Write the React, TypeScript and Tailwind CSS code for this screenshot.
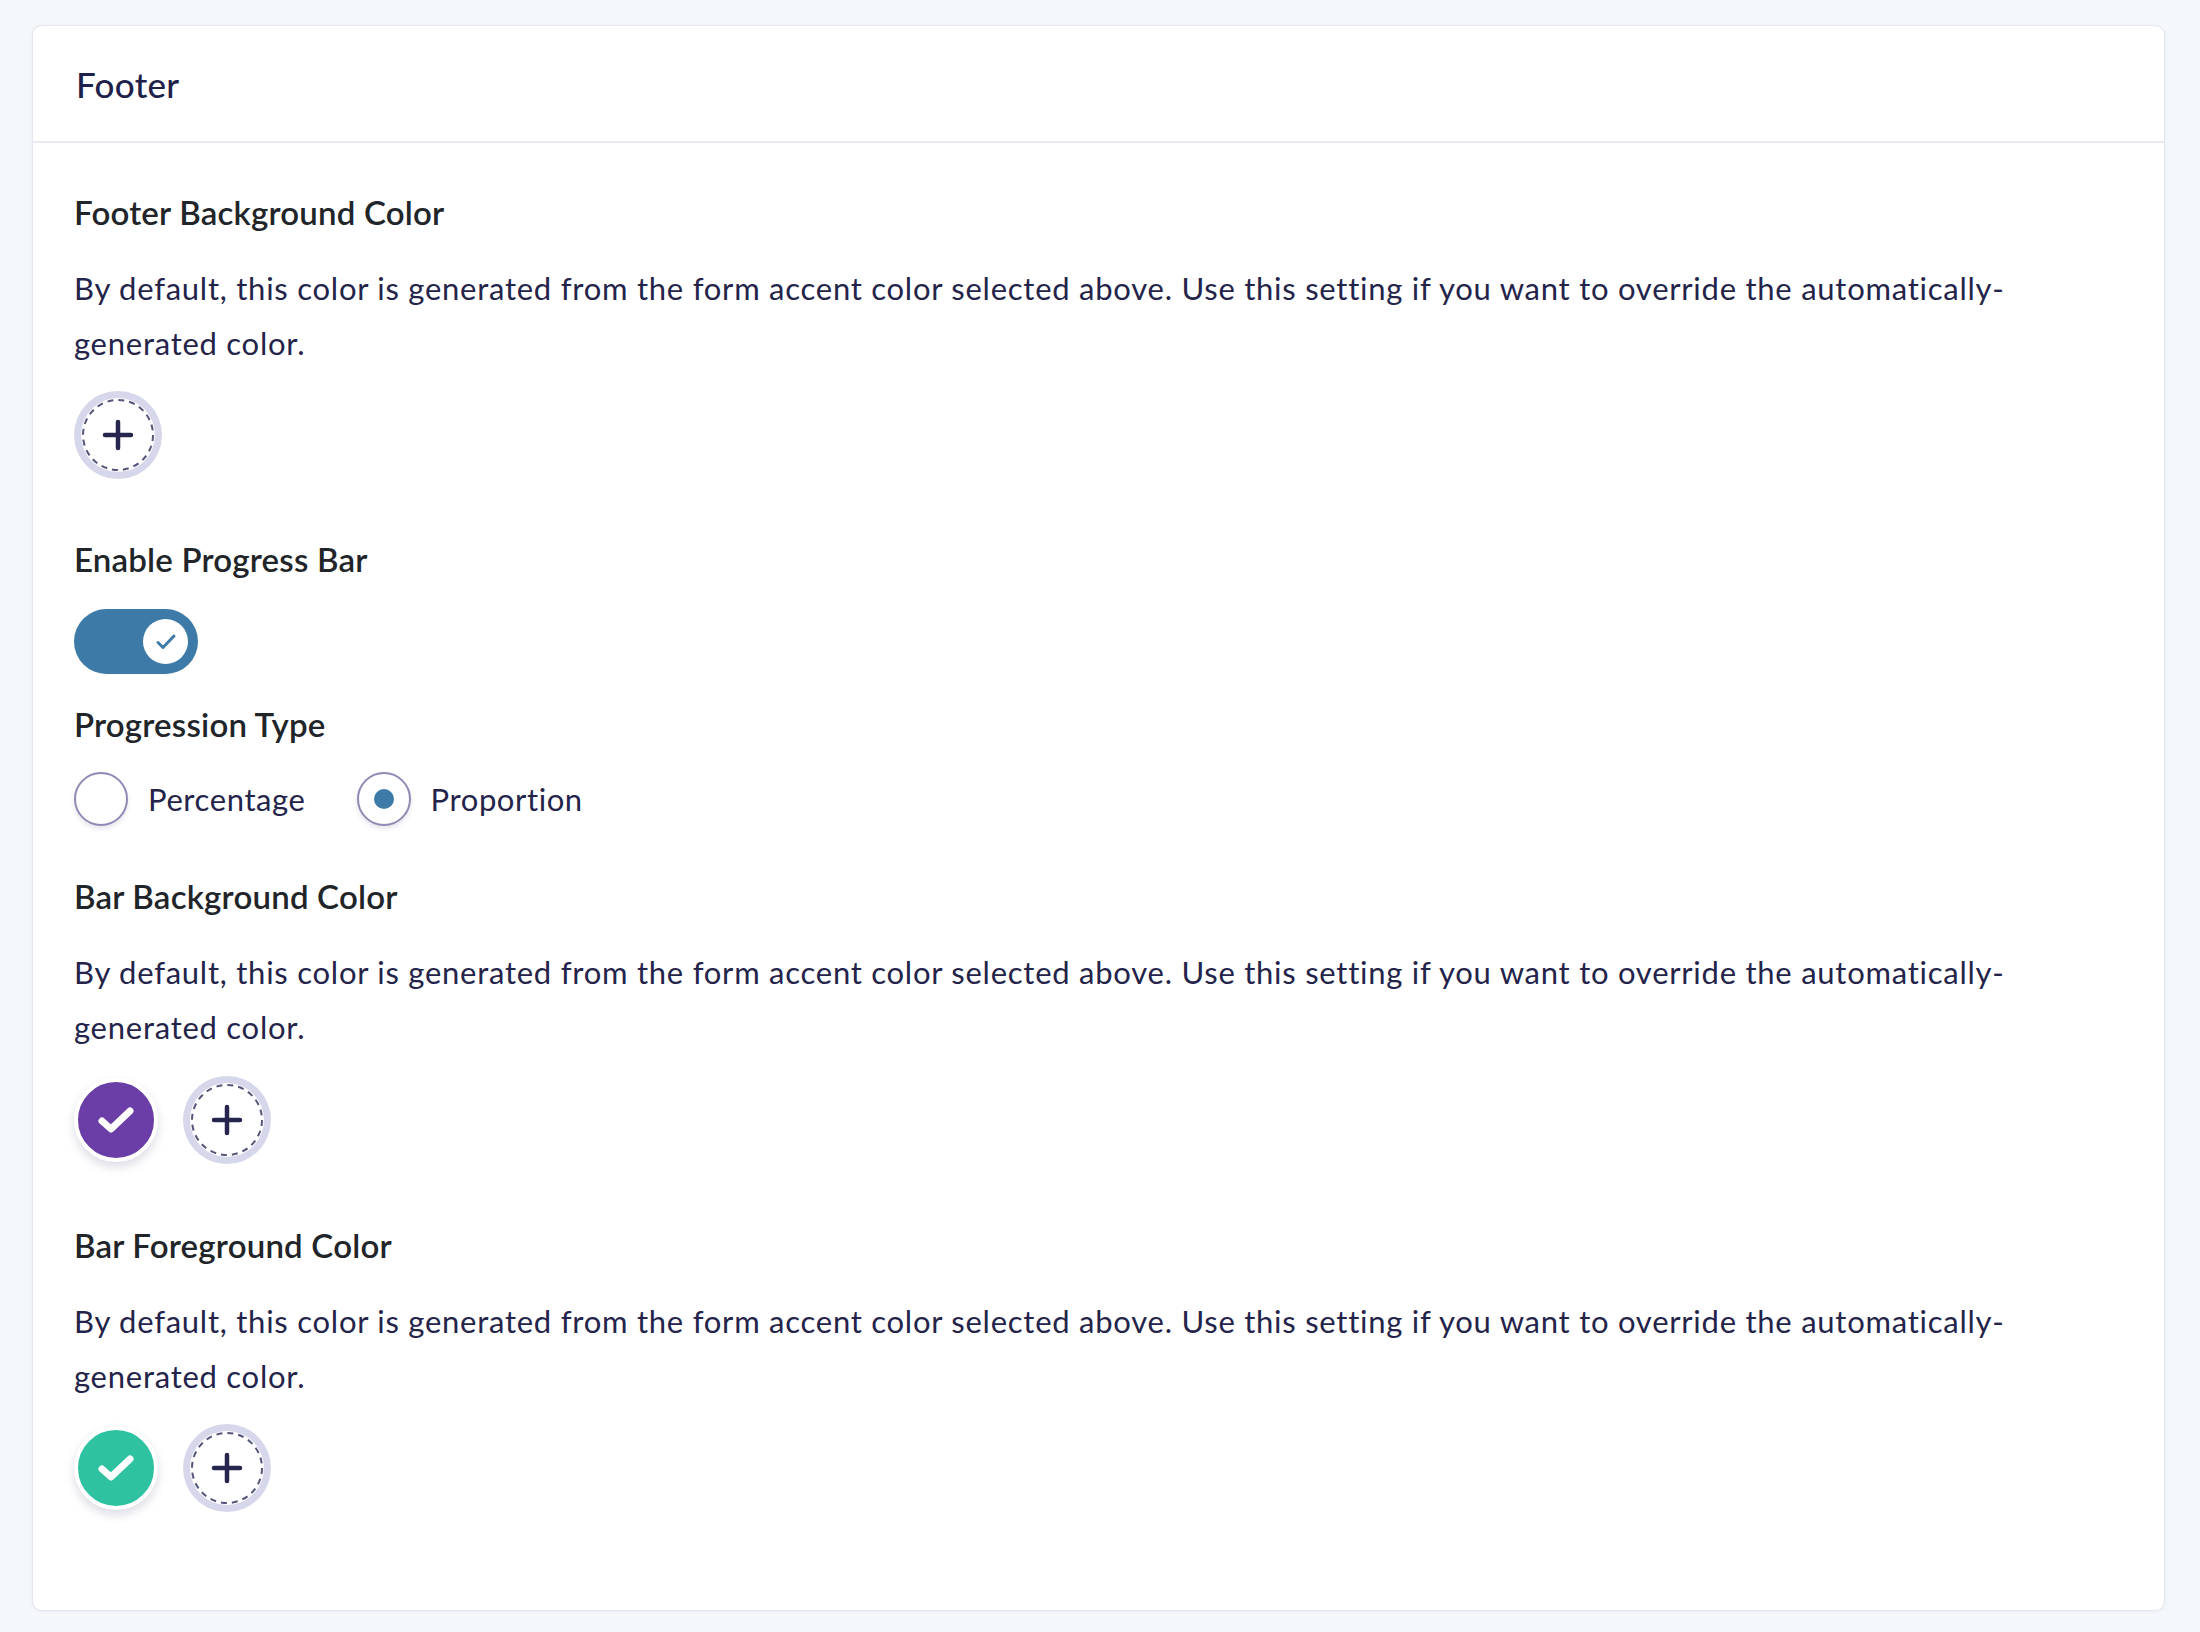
import React from "react";

const FONT = { fontFamily: "Lato, 'Noto Sans', sans-serif" };

function Label({ children }: { children: React.ReactNode }) {
  return (
    <div className="text-[33px] font-semibold leading-[44px] tracking-[0.2px] text-[#212529]">{children}</div>
  );
}

function Desc() {
  return (
    <p className="mt-[27px] max-w-[1990px] text-[31px] leading-[55px] tracking-[0.75px] text-[#24244a]">
      By default, this color is generated from the form accent color selected above. Use this setting if you want to override the automatically-generated color.
    </p>
  );
}

function PlusButton() {
  return (
    <div className="flex h-[88px] w-[88px] items-center justify-center rounded-full bg-[#d6d7ea]">
      <div className="relative flex h-[74px] w-[74px] items-center justify-center rounded-full bg-white">
        <svg className="absolute inset-0" width="74" height="74" viewBox="0 0 74 74" fill="none">
          <circle cx="37" cy="37" r="35" stroke="#55557a" strokeWidth="2" strokeDasharray="6 5" />
        </svg>
        <svg className="relative" width="32" height="32" viewBox="0 0 32 32" fill="none">
          <path d="M16 3v26M3 16h26" stroke="#25254d" strokeWidth="4.5" strokeLinecap="round" />
        </svg>
      </div>
    </div>
  );
}

function Swatch({ color }: { color: string }) {
  return (
    <div
      className="flex h-[84px] w-[84px] items-center justify-center rounded-full border-[4px] border-white shadow-[0_5px_10px_rgba(60,60,110,0.18)]"
      style={{ backgroundColor: color }}
    >
      <svg width="38" height="32" viewBox="0 0 38 32" fill="none">
        <path d="M5 17l9 8L33 7" stroke="#ffffff" strokeWidth="7" strokeLinecap="round" strokeLinejoin="round" />
      </svg>
    </div>
  );
}

function Radio({ checked, label }: { checked: boolean; label: string }) {
  return (
    <div className="flex items-center gap-[20px]">
      <div className="flex h-[54px] w-[54px] items-center justify-center rounded-full border-2 border-[#8e8ab5] bg-white shadow-[0_3px_5px_rgba(60,60,110,0.12)]">
        {checked && <div className="h-[20px] w-[20px] rounded-full bg-[#3d7aa7]" />}
      </div>
      <span className="text-[31px] leading-[40px] tracking-[0.6px] text-[#24244a]">{label}</span>
    </div>
  );
}

export default function App() {
  return (
    <div className="min-h-[1632px] w-full bg-[#f5f8fb] pl-[32px] pr-[35px] pt-[25px]" style={FONT}>
      <div className="h-[1586px] rounded-[10px] border border-[#e4e6ef] bg-white shadow-[0_1px_4px_rgba(40,40,90,0.06)]">
        <div className="flex h-[117px] items-center border-b-2 border-[#e9eaf2] px-[43px]">
          <h1 className="text-[35px] font-medium leading-[44px] tracking-[0.3px] text-[#1f1f4b]">Footer</h1>
        </div>
        <div className="px-[41px] pt-[47px]">
          <Label>Footer Background Color</Label>
          <Desc />
          <div className="mt-[20px] flex">
            <PlusButton />
          </div>

          <div className="mt-[58px]">
            <Label>Enable Progress Bar</Label>
          </div>
          <div className="mt-[28px] flex h-[65px] w-[124px] items-center justify-end rounded-full bg-[#3d7aa7] pr-[10px]">
            <div className="flex h-[45px] w-[45px] items-center justify-center rounded-full bg-white">
              <svg width="22" height="18" viewBox="0 0 22 18" fill="none">
                <path d="M3 9.5l5 5L19 3" stroke="#3d7aa7" strokeWidth="3" strokeLinecap="round" strokeLinejoin="round" />
              </svg>
            </div>
          </div>

          <div className="mt-[28px]">
            <Label>Progression Type</Label>
          </div>
          <div className="mt-[26px] flex items-center gap-[51px]">
            <Radio checked={false} label="Percentage" />
            <Radio checked={true} label="Proportion" />
          </div>

          <div className="mt-[48px]">
            <Label>Bar Background Color</Label>
          </div>
          <Desc />
          <div className="mt-[21px] flex items-center gap-[25px]">
            <Swatch color="#6a3ea6" />
            <PlusButton />
          </div>

          <div className="mt-[59px]">
            <Label>Bar Foreground Color</Label>
          </div>
          <Desc />
          <div className="mt-[20px] flex items-center gap-[25px]">
            <Swatch color="#2fc2a0" />
            <PlusButton />
          </div>
        </div>
      </div>
    </div>
  );
}
